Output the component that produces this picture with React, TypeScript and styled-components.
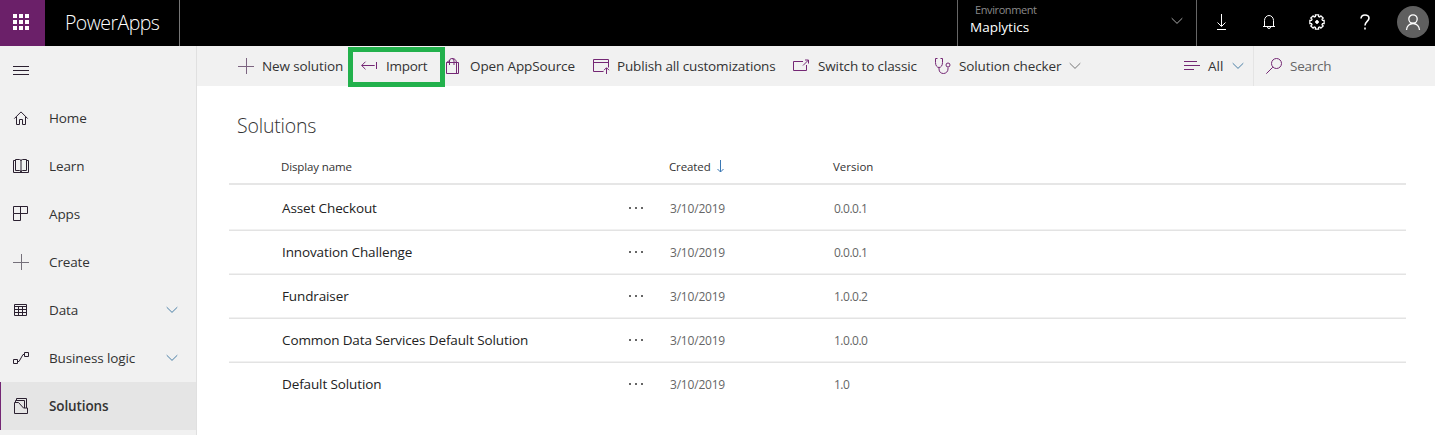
import React from "react";
import styled, { createGlobalStyle, css } from "styled-components";

const Global = createGlobalStyle`
  * { box-sizing: border-box; }
  html, body { margin: 0; padding: 0; background: #fff; overflow: hidden; }
  body { font-family: "Open Sans", "Noto Sans", sans-serif; color: #333; }
`;

const Page = styled.div`
  width: 1435px;
  height: 435px;
  display: flex;
  flex-direction: column;
  background: #fff;
`;

const Label = styled.span<{ $size?: number; $track?: number; $weight?: number; $color?: string }>`
  font-size: ${(p) => p.$size ?? 13.5}px;
  letter-spacing: ${(p) => p.$track ?? -0.12}px;
  font-weight: ${(p) => p.$weight ?? 400};
  color: ${(p) => p.$color ?? "#333"};
  line-height: 20px;
  white-space: nowrap;
`;

const Header = styled.header`
  height: 46px;
  flex: none;
  display: flex;
  background: #000;
  > * { flex: none; }
`;
const Waffle = styled.div`
  width: 45px;
  padding: 14px 0 0 13px;
  background: #6b2069;
  display: grid;
  grid-template-columns: repeat(3, 4px);
  grid-auto-rows: 4px;
  gap: 2px;
  i { background: #fff; }
`;
const Brand = styled.div`
  width: 135px;
  padding: 9px 0 0 20px;
  border-right: 1px solid #777;
  span { line-height: 28px; }
`;
const Environment = styled.div`
  margin-left: 777px;
  width: 240px;
  border-left: 1px solid #666;
  border-right: 1px solid #666;
  display: flex;
  justify-content: space-between;
  padding: 1px 13px 0 12px;
  svg { margin-top: 16px; }
`;
const EnvironmentNames = styled.div`
  display: flex;
  flex-direction: column;
  span { line-height: 19px; }
  span:first-child { padding-left: 5px; line-height: 17px; }
`;
const HeaderActions = styled.div`
  display: grid;
  grid-template-columns: repeat(4, 48px) 46px;
  align-items: center;
  justify-items: center;
  height: 44px;
`;
const Avatar = styled.div`
  width: 32px;
  height: 32px;
  margin-left: 1px;
  border-radius: 50%;
  background: #5f5f5f;
  display: flex;
  align-items: center;
  justify-content: center;
`;

const Body = styled.div`
  flex: 1;
  display: flex;
  min-height: 0;
`;
const Sidebar = styled.nav`
  width: 197px;
  flex: none;
  background: #f1f1f1;
  border-right: 1px solid #e0e0e0;
`;
const MenuToggle = styled.div`
  height: 48px;
  padding: 16px 0 0 13px;
  svg { display: block; }
`;
const NavItem = styled.div<{ $active?: boolean }>`
  height: 48px;
  display: flex;
  align-items: center;
  padding-left: 13px;
  ${(p) => p.$active && css`
    background: #e5e5e5;
    box-shadow: inset 1px 0 #742774;
  `}
  > svg:first-child { margin-right: 20px; flex: none; }
  > svg:last-child:not(:first-child) { margin: 0 18px 0 auto; }
`;

const Main = styled.main`
  flex: 1;
  min-width: 0;
`;
const Toolbar = styled.div`
  height: 40px;
  display: flex;
  background: #f1f1f1;
  padding-left: 41px;
`;
const Command = styled.div<{ $width: number; $icon?: number; $gap?: number }>`
  width: ${(p) => p.$width}px;
  flex: none;
  display: flex;
  align-items: center;
  position: relative;
  > svg:first-child { margin-right: ${(p) => (p.$icon ?? 25) - 17}px; flex: none; }
  > svg:last-child { margin-left: ${(p) => p.$gap ?? 8}px; }
`;
const Highlight = styled.div`
  position: absolute;
  left: -13px;
  top: 1px;
  width: 97px;
  height: 40px;
  border: 5px solid #22b14c;
  z-index: 1;
`;
const SearchBox = styled.div`
  flex: 1;
  display: flex;
  align-items: center;
  border-left: 1px solid #e4e4e4;
  padding-left: 12px;
  gap: 7px;
`;

const Title = styled.h1`
  margin: 0;
  height: 66px;
  padding: 26px 0 0 40px;
  font-size: 20px;
  font-weight: 400;
  line-height: 28px;
  display: flex;
  span { line-height: 28px; }
`;
const Table = styled.div`
  width: 1177px;
  margin-left: 32px;
`;
const HeadRow = styled.div`
  display: grid;
  grid-template-columns: 388px 164px 1fr;
  align-items: center;
  height: 33px;
  padding: 0 0 2px 52px;
  border-bottom: 2px solid #e6e6e6;
  margin-bottom: 1px;
`;
const SortedHead = styled.div`
  display: flex;
  align-items: center;
  gap: 6px;
`;
const TableRow = styled.div`
  display: grid;
  grid-template-columns: 347px 41px 164px 1fr;
  align-items: center;
  height: 44px;
  padding-left: 53px;
  & + & { box-shadow: inset 0 1px #e3e3e3, 0 -1px #f1f1f1; }
`;
const Meta = styled(Label)`
  font-size: 12px;
  color: #666;
  margin-top: 2px;
`;

const ink = "#2b2030";
const purple = "#742774";

const Svg = ({ w = 16, h = 16, c = ink, children }: { w?: number; h?: number; c?: string; children: React.ReactNode }) => (
  <svg width={w} height={h} viewBox={`0 0 ${w} ${h}`} fill="none" stroke={c} strokeWidth="1">{children}</svg>
);
const Chevron = ({ w = 12, c = "#4a7fa6" }: { w?: number; c?: string }) => (
  <Svg w={w} h={8} c={c}><path d={`M.7 1.2 ${w / 2} 6.4 ${w - 0.7} 1.2`} /></Svg>
);

// Eight-toothed outline: each tooth spans four points, two on the rim and two in the valley.
const gearPath = (() => {
  const points: string[] = [];
  for (let i = 0; i < 8; i++) {
    [[-0.22, 7.3], [0.22, 7.3], [0.28, 5.7], [0.505, 5.7]].forEach(([offset, radius]) => {
      const a = (i * Math.PI) / 4 + offset;
      points.push(`${(8 + radius * Math.cos(a)).toFixed(2)} ${(8 + radius * Math.sin(a)).toFixed(2)}`);
    });
  }
  return `M${points.join("L")}Z`;
})();

const icons = {
  home: <Svg><path d="M1.300 8.600 8 1.900l6.700 6.700M3.500 7v7.500h3v-5h3v5h3V7" /></Svg>,
  learn: <Svg><path d="M2.500 2.500h-2v12h15v-12h-2M2.500 1.500h4q1.500 0 1.500 1.500 0-1.500 1.500-1.500h4v11h-4Q8 12.500 8 14q0-1.500-1.500-1.500h-4zM8 3v11" /></Svg>,
  apps: <Svg><path d="M.5.5h14v7H.5zM.5 7.500v7h7v-14" /></Svg>,
  create: <Svg c="#75707a"><path d="M0 8.500h16M8.500 0v16" /></Svg>,
  data: <Svg><path d="M1.500 2.500h12v11h-12zM1.500 4.500h12M1.500 7.500h12M1.500 10.500h12M5.500 4.500v9M9.500 4.500v9" /></Svg>,
  logic: <Svg><path d="M.5 9.500h4v4h-4zM11.500 2.500h4v4h-4zM4.500 11.500H6L10 4.500h1.500" /></Svg>,
  solutions: <Svg><path d="M1.500 4.500h4l5 5.500h4v5.500h-13zM2.500 4.500v-2h9V10M3.500 2.500v-2h10V10" /></Svg>,
};

const Dots = () => (
  <svg width="16" height="4" viewBox="0 0 16 4" fill="#666"><path d="M0 1h2v2H0zM6 1h2v2H6zM12 1h2v2h-2z" /></svg>
);

const nav: { icon: keyof typeof icons; text: string; more?: boolean; active?: boolean }[] = [
  { icon: "home", text: "Home" },
  { icon: "learn", text: "Learn" },
  { icon: "apps", text: "Apps" },
  { icon: "create", text: "Create" },
  { icon: "data", text: "Data", more: true },
  { icon: "logic", text: "Business logic", more: true },
  { icon: "solutions", text: "Solutions", active: true },
];

const rows = [
  { name: "Asset Checkout", version: "0.0.0.1" },
  { name: "Innovation Challenge", version: "0.0.0.1" },
  { name: "Fundraiser", version: "1.0.0.2" },
  { name: "Common Data Services Default Solution", version: "1.0.0.0" },
  { name: "Default Solution", version: "1.0" },
];

export default function App() {
  return (
    <Page>
      <Global />
      <Header>
        <Waffle>{Array.from({ length: 9 }, (_, i) => <i key={i} />)}</Waffle>
        <Brand><Label $size={19.5} $track={-0.55} $weight={300} $color="#fff">PowerApps</Label></Brand>
        <Environment>
          <EnvironmentNames>
            <Label $size={11} $track={-0.4} $color="#8a8a8a">Environment</Label>
            <Label $size={13.5} $track={0} $weight={500} $color="#fff">Maplytics</Label>
          </EnvironmentNames>
          <Chevron c="#aaa" />
        </Environment>
        <HeaderActions>
          <Svg c="#fff" w={17} h={16}><path d="M8.500 0v12M4.500 8.500l4 4 4-4M4 15.500h9" /></Svg>
          <Svg c="#fff"><path d="M3.500 12.500V6.500a4.500 5 0 0 1 9 0v6M2 12.500h12M6.500 13a1.500 1.500 0 0 0 3 0" /></Svg>
          <Svg c="#fff"><path strokeWidth="1.300" d={gearPath} /><circle cx="8" cy="8" r="1.400" fill="#fff" /></Svg>
          <Svg c="#fff"><path strokeWidth="1.600" d="M4 4.500Q4.300 1 8 1t4 3c0 3.200-4 3.600-4 7.500M8 13.500v2" /></Svg>
          <Avatar><Svg c="#fff"><circle cx="8" cy="5" r="4.200" strokeWidth="1.300" /><path strokeWidth="1.300" d="M1.500 16a6.500 6.500 0 0 1 13 0" /></Svg></Avatar>
        </HeaderActions>
      </Header>
      <Body>
        <Sidebar>
          <MenuToggle><Svg><path d="M0 4.500h16M0 8.500h16M0 12.500h16" /></Svg></MenuToggle>
          {nav.map((n) => (
            <NavItem key={n.text} $active={n.active}>
              {icons[n.icon]}
              <Label $weight={n.active ? 600 : 400}>{n.text}</Label>
              {n.more && <Chevron />}
            </NavItem>
          ))}
        </Sidebar>
        <Main>
          <Toolbar>
            <Command $width={123} $icon={24}>
              <Svg w={17} c="#7c6480"><path d="M0 8.500h16M8.500 0v16" /></Svg>
              <Label>New solution</Label>
            </Command>
            <Command $width={84}>
              <Svg w={17} c={purple}><path d="M.7 7.500h13M4.500 3.700.7 7.500l3.800 3.800M15.500 4v7" /></Svg>
              <Label $track={-0.3}>Import</Label>
              <Highlight />
            </Command>
            <Command $width={148}>
              <Svg w={17} c={purple}><path d="M1.500 4.500h12v11h-12zM11.500 4.500v11M4.500 7V3Q4.500.5 6.800.5T9 3v4M6.800.5q4-.3 4.700 4M1.500 4.500l3-2" /></Svg>
              <Label>Open AppSource</Label>
            </Command>
            <Command $width={200} $icon={24}>
              <Svg w={17} c={purple}><path d="M10.500 13.500H.5v-12h15v8M.5 4.500h15M13.500 16v-6M11 12.200l2.500-2.500 2.500 2.500" /></Svg>
              <Label $track={-0.15}>Publish all customizations</Label>
            </Command>
            <Command $width={141}>
              <Svg w={17} c={purple}><path d="M10 3.500H.5v9h13V7M10 7.500l5.500-5.500M12 2h3.500v3.500" /></Svg>
              <Label>Switch to classic</Label>
            </Command>
            <Command $width={250}>
              <Svg w={17} c={purple}><path d="M3.500.5h-2v4c0 3 1.500 5 3.500 5s3.500-2 3.500-5v-4h-2M5 9.500V11c0 3 2 4.500 4.500 4.500S14 13.500 14 11V9.500" /><circle cx="14" cy="7" r="2" /></Svg>
              <Label>Solution checker</Label>
              <Chevron c="#777" />
            </Command>
            <Command $width={69} $icon={24} $gap={9}>
              <Svg w={17} c={purple}><path d="M0 3.500h13M0 7.500h16M0 11.500h10" /></Svg>
              <Label $track={0}>All</Label>
              <Chevron />
            </Command>
            <SearchBox>
              <Svg w={17} c={purple}><circle cx="10.500" cy="5.500" r="5" /><path d="M6.800 9.200.3 15.700" /></Svg>
              <Label $track={-0.25} $color="#666">Search</Label>
            </SearchBox>
          </Toolbar>
          <Title><Label $size={19.5} $track={-0.2} $weight={300}>Solutions</Label></Title>
          <Table>
            <HeadRow>
              <Label $size={11.5}>Display name</Label>
              <SortedHead>
                <Label $size={11.5}>Created</Label>
                <Svg w={8} h={13} c="#3b78b4"><path d="M3.500 0v12M.5 9l3 3 3-3" /></Svg>
              </SortedHead>
              <Label $size={11.5} $track={0}>Version</Label>
            </HeadRow>
            {rows.map((r) => (
              <TableRow key={r.name}>
                <Label $color="#222">{r.name}</Label>
                <Dots />
                <Meta $track={-0.2}>3/10/2019</Meta>
                <Meta $track={-0.5}>{r.version}</Meta>
              </TableRow>
            ))}
          </Table>
        </Main>
      </Body>
    </Page>
  );
}
